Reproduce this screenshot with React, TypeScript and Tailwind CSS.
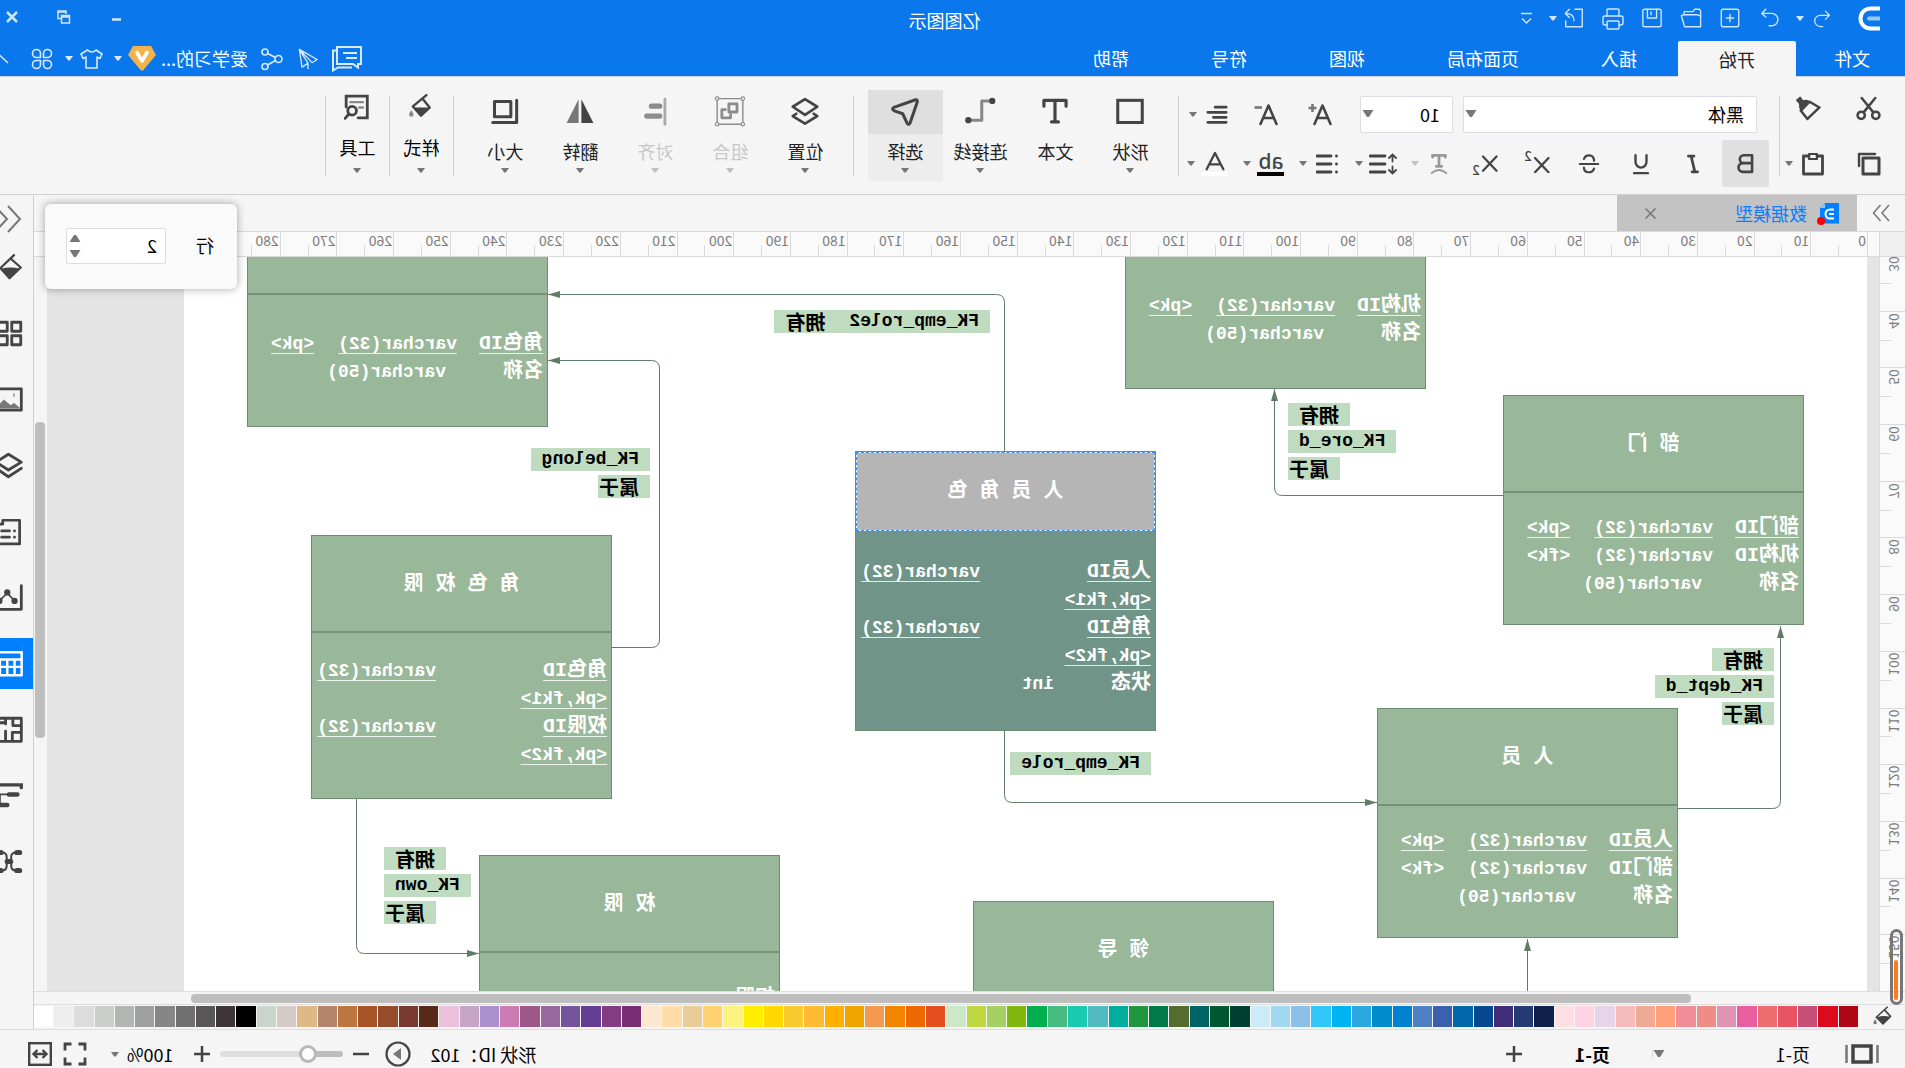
import React from 'react';
import { Printer } from 'lucide-react';

interface IconProps {
  size?: number;
  stroke?: number;
  className?: string;
  children: React.ReactNode;
}

const Icon: React.FC<IconProps> = ({ size = 24, stroke = 2, className = '', children }) => (
  <svg
    width={size}
    height={size}
    viewBox="0 0 24 24"
    fill="none"
    stroke="currentColor"
    strokeWidth={stroke}
    strokeLinecap="round"
    strokeLinejoin="round"
    className={`shrink-0 ${className}`}
  >
    {children}
  </svg>
);

const Caret: React.FC<{ className?: string }> = ({ className = 'text-[#777]' }) => (
  <svg width="8" height="5" viewBox="0 0 8 5" className={`shrink-0 ${className}`}>
    <path d="M0 0h8L4.800 4.400h-1.600z" fill="currentColor" />
  </svg>
);

const BigCaret: React.FC<{ className?: string }> = ({ className = '' }) => (
  <svg width="12" height="8" viewBox="0 0 12 8" className={`shrink-0 text-[#777] ${className}`}>
    <path d="M.5 0h11L7 7H5z" fill="currentColor" />
  </svg>
);

// Quick access toolbar

const quickActions = [
  {
    label: '恢复',
    icon: <path d="M15.500 2.500 L20 7 L15.500 11 M19.500 7 H9 A6.500 6.500 0 0 0 9 20.500 H12" />,
  },
  {
    label: '新建',
    icon: (
      <>
        <rect x="2.500" y="2.500" width="19" height="19" rx="2" />
        <path d="M12 8v8M8 12h8" />
      </>
    ),
  },
  {
    label: '打开',
    icon: <path d="M1.500 6V4.500L2.500 2.500H8L10 5H19.500V8.500M1.500 6V21.500H19L22.500 9.500L20.500 8.500H5L1.500 10" />,
  },
  {
    label: '保存',
    icon: (
      <>
        <rect x="2" y="2.500" width="20" height="19" rx="2" />
        <path d="M7 2.500V12H17V2.500M13 5.500V8.500" />
      </>
    ),
  },
  { label: '打印', icon: null },
  {
    label: '导出',
    icon: <path d="M11 2.500H3V21.500H21V15M12 15C12 9 15 7 21 7M17 2.500L21.500 7L17 11.500" />,
  },
];

const TitleBar: React.FC = () => (
  <div className="grid h-[41px] grid-cols-[1fr_auto_1fr] items-center text-[#cfe5fc]">
    <div className="flex h-full items-center pb-1 pl-[25px]">
      <svg width="22" height="25" viewBox="0 0 22 25" fill="none" strokeWidth="4">
        <path d="M0 2.500H9.500A9.500 9.500 0 0 1 9.500 22.500H0" stroke="#fff" />
        <path d="M0 12.500H11" stroke="#9cc9fa" strokeLinecap="round" />
      </svg>
      <button className="ml-5 flex w-8 justify-center" aria-label="撤销">
        <Icon size={20} stroke={1.5}>
          <path d="M8 2.500 L3 7.500 L8 12.500 M3.500 7.500 H14 A6.500 6.500 0 0 1 14 21 H11" />
        </Icon>
      </button>
      <button className="flex w-3 justify-center" aria-label="撤销列表"><Caret className="text-[#cfe5fc]" /></button>
      <div className="ml-[5px] flex">
        {quickActions.map((action) => (
          <button key={action.label} className="flex w-[39px] justify-center" aria-label={action.label}>
            {action.icon ? <Icon size={22} stroke={1.5}>{action.icon}</Icon> : <Printer size={24} strokeWidth={1.4} />}
          </button>
        ))}
      </div>
      <button className="-ml-1 flex w-3 justify-center" aria-label="导出列表"><Caret className="text-[#cfe5fc]" /></button>
      <button className="flex w-10 justify-center" aria-label="自定义">
        <svg width="11" height="13" viewBox="0 0 11 13" fill="none" stroke="currentColor" strokeWidth="1.500">
          <path d="M0 1.500H11M1 6.500L5.500 11L10 6.500" />
        </svg>
      </button>
    </div>
    <h1 className="pl-4 text-[18px] text-white">亿图图示</h1>
    <div className="flex h-full items-center justify-end gap-[38px] pr-[5px] pb-2">
      <button aria-label="最小化">
        <svg width="14" height="14"><path d="M2 9.500H11" stroke="currentColor" strokeWidth="2.500" /></svg>
      </button>
      <button aria-label="还原">
        <svg width="14" height="14" fill="none" stroke="currentColor" strokeWidth="1.500">
          <path d="M5 4V1H13V8.500H10" />
          <path d="M1.500 5.500H9.500V13H1.500zM1.500 7H9.500M5 2H13" />
        </svg>
      </button>
      <button aria-label="关闭">
        <svg width="14" height="14"><path d="M2 2L12 12M12 2L2 12" stroke="currentColor" strokeWidth="2.500" /></svg>
      </button>
    </div>
  </div>
);

const menuTabs = ['插入', '页面布局', '视图', '符号', '帮助'];

const MenuBar: React.FC = () => (
  <nav className="flex h-[35px] items-stretch text-[18px] text-white">
    <button className="w-[109px] pl-[35px] text-left">文件</button>
    <button className="relative -mb-px rounded-t-xs bg-[#f5f5f5] px-[41px] text-[#222]">开始</button>
    {menuTabs.map((tab) => (
      <button key={tab} className="px-[41px]">{tab}</button>
    ))}
    <div className="-mr-3 ml-auto flex items-center text-[#d9eafd]">
      <button className="flex w-9 justify-center" aria-label="消息">
        <svg width="30" height="26" viewBox="0 0 30 26" fill="none" stroke="currentColor" strokeWidth="2">
          <path d="M1 1H25V18H9L4 21.500V18H1zM5 7H19M5 12H16" />
          <path d="M25 4.500H29V24.500L24 21.500H10" />
        </svg>
      </button>
      <button className="ml-[7px] flex w-7 justify-center" aria-label="发送">
        <Icon size={22} stroke={1.4}>
          <path d="M21.500 1.500L2 12.500L7.500 16L21.500 1.500L18.500 21L12 16.500L21.500 1.500M12 16.500V22.500" />
        </Icon>
      </button>
      <button className="ml-2 flex w-7 justify-center" aria-label="分享">
        <Icon size={24} stroke={1.6}>
          <circle cx="5.500" cy="12" r="3.500" />
          <circle cx="19" cy="5" r="3" />
          <circle cx="19" cy="19.500" r="3" />
          <path d="M8.500 10.500L16.500 6.500M8.500 13.500L16.500 18" />
        </Icon>
      </button>
      <button className="ml-[10px] flex w-[88px] text-white">爱学习的...</button>
      <svg width="28" height="25" viewBox="0 0 28 25" className="ml-1">
        <path d="M5 0H23L28 9L15 24.500H13L0 9z" fill="#f2b34c" />
        <path d="M9 6.500L14 15L19 6.500" fill="none" stroke="#fff" strokeWidth="3.500" strokeLinecap="round" strokeLinejoin="round" />
      </svg>
      <button className="flex w-5 justify-center" aria-label="账户"><Caret className="text-[#d9eafd]" /></button>
      <button className="ml-[2px] flex w-7 justify-center" aria-label="主题">
        <Icon size={24} stroke={1.6}>
          <path d="M8 3L2 7L4 11.500L7 10V21H18V10L21 11.500L23 7L16.500 3Q12 7 8 3z" />
        </Icon>
      </button>
      <button className="ml-[3px] flex w-3 justify-center" aria-label="主题列表"><Caret className="text-[#d9eafd]" /></button>
      <button className="ml-[7px] flex w-7 justify-center" aria-label="应用">
        <Icon size={24} stroke={1.6}>
          <path d="M10.500 10.500H6.500A4 4 0 1 1 10.500 6.500zM13.500 10.500V6.500A4 4 0 1 1 17.500 10.500zM10.500 13.500V17.500A4 4 0 1 1 6.500 13.500zM13.500 13.500H17.500A4 4 0 1 1 13.500 17.500z" />
        </Icon>
      </button>
      <button className="ml-4 flex w-6 justify-center" aria-label="收起">
        <svg width="19" height="11" viewBox="0 0 19 11" fill="none" stroke="currentColor" strokeWidth="1.500">
          <path d="M1 10L9.500 2L18 10" />
        </svg>
      </button>
    </div>
  </nav>
);

// Ribbon

const Separator: React.FC = () => <div className="h-[80px] w-px shrink-0 bg-[#d0d0d0]" />;

const ClipboardGroup: React.FC = () => (
  <div className="w-[125px] shrink-0 pl-6">
    <div className="flex h-[37px] items-start">
      <button aria-label="剪切">
        <Icon size={25} stroke={2.4}>
          <circle cx="5" cy="18.500" r="3.500" />
          <circle cx="19" cy="18.500" r="3.500" />
          <path d="M7.500 15.500L18.500 2M16.500 15.500L5.500 2" />
        </Icon>
      </button>
      <button className="ml-[35px]" aria-label="格式刷">
        <Icon size={25} stroke={2.4}>
          <path d="M11 5.500L19.500 14L13 22L1.500 11z" />
          <path d="M10.500 5.500L14 4L17.500 4.500L20 1L23.500 4L20.500 7.500L20.500 11L19 14.500z" fill="currentColor" strokeWidth="1" />
        </Icon>
      </button>
    </div>
    <div className="mt-[7px] flex h-[47px] items-center">
      <button aria-label="复制">
        <Icon size={24} stroke={2.4}>
          <rect x="2" y="6" width="16" height="16" strokeWidth="3" />
          <path d="M6 2H22V14" />
        </Icon>
      </button>
      <button className="ml-8" aria-label="粘贴">
        <Icon size={24} stroke={2.8}>
          <path d="M8 4H2.500V22H21.500V4H16" />
          <rect x="8" y="2" width="8" height="5" strokeWidth="2.200" />
        </Icon>
      </button>
      <button className="ml-[6px] flex w-3 justify-center" aria-label="粘贴选项"><Caret /></button>
    </div>
  </div>
);

const letterTools = [
  { label: '斜体', icon: <path d="M11 3.500H17M7 20.500H13M14 3.500L10 20.500" strokeWidth="3" /> },
  { label: '下划线', icon: <path d="M6 2.500V9.500A6 6.500 0 0 0 18 9.500V2.500M4.500 22H19.500" strokeWidth="2.600" /> },
  {
    label: '删除线',
    icon: <path d="M2 12H22M17.500 6.500C16.500 3.500 14.500 2.500 12 2.500C8 2.500 6.500 5 6.500 8.500M6.500 17C7.500 20 9.500 21 12 21C16 21 17.500 19 17.500 16" strokeWidth="2.400" />,
  },
];

const FontGroup: React.FC = () => (
  <div className="w-[600px] shrink-0 text-[#444]">
    <div className="flex h-[37px] items-center pl-[22px]">
      <div className="relative h-full w-[294px]">
        <select aria-label="字体" className="h-full w-full appearance-none rounded-xs border border-[#dcdce2] bg-white pl-3 text-[18px] text-black" defaultValue="黑体">
          <option>黑体</option>
        </select>
        <BigCaret className="pointer-events-none absolute top-[14px] right-[2px]" />
      </div>
      <div className="relative ml-[10px] h-full w-[93px]">
        <select aria-label="字号" className="h-full w-full appearance-none rounded-xs border border-[#dcdce2] bg-white pl-3 text-[18px] text-black" defaultValue="10">
          <option>10</option>
        </select>
        <BigCaret className="pointer-events-none absolute top-[14px] right-[2px]" />
      </div>
      <button className="ml-[13px] flex w-[54px] justify-center" aria-label="增大字号">
        <Icon size={24} stroke={2.6}>
          <path d="M1.500 21L9.500 2.500L17.500 21M4.500 15H14.500" />
          <path d="M19.500 1V9M15.500 5H23.500" stroke="#777" strokeLinecap="butt" />
        </Icon>
      </button>
      <button className="flex w-[54px] justify-center" aria-label="减小字号">
        <Icon size={24} stroke={2.6}>
          <path d="M1.500 21L9.500 2.500L17.500 21M4.500 15H14.500" />
          <path d="M16 4.500H23.500" stroke="#777" strokeLinecap="butt" />
        </Icon>
      </button>
      <button className="ml-1 flex w-9 justify-center" aria-label="对齐方式">
        <Icon size={22} stroke={3}>
          <path d="M2 3.500H14M2 9H22M2 14.500H16M2 20H22" />
        </Icon>
      </button>
      <button className="flex w-3 justify-center" aria-label="对齐选项"><Caret /></button>
    </div>
    <div className="mt-[7px] flex h-[47px] items-center pl-[10px]">
      <button className="mr-[3px] flex h-[47px] w-[47px] items-center justify-center rounded-xs bg-[#e0e0e0]" aria-label="加粗">
        <Icon size={21} stroke={3}>
          <path d="M4.500 2.500H14A4.500 4.500 0 0 1 14 11.500H4.500zM4.500 11.500H15A5 5 0 0 1 15 21.500H4.500z" />
        </Icon>
      </button>
      {letterTools.map((tool) => (
        <button key={tool.label} className="flex w-[52px] justify-center" aria-label={tool.label}>
          <Icon size={22}>{tool.icon}</Icon>
        </button>
      ))}
      <button className="flex w-[52px] items-center justify-center" aria-label="上标">
        <Icon size={18} stroke={3}><path d="M2 4L20 23M20 4L2 23" /></Icon>
        <span className="-mt-4 text-[13px] leading-none font-medium">2</span>
      </button>
      <button className="flex w-[52px] items-center justify-center" aria-label="下标">
        <Icon size={18} stroke={3}><path d="M2 2L20 21M20 2L2 21" /></Icon>
        <span className="mt-3 text-[13px] leading-none font-medium">2</span>
      </button>
      <div className="ml-[2px] flex w-14 items-center text-[#999]">
        <button className="flex w-9 justify-center" aria-label="弯曲文字">
          <Icon size={22}>
            <path d="M5 4.500V2.500H19V4.500M12 2.500V14.500M9 14.500H15" strokeWidth="3" />
            <path d="M4 22Q12 15 20 22" />
          </Icon>
        </button>
        <span className="flex w-3 justify-center"><Caret className="text-[#c4c4c4]" /></span>
      </div>
      <div className="flex w-14 items-center">
        <button className="flex w-9 justify-center" aria-label="行距">
          <svg width="28" height="22" viewBox="0 0 28 22" fill="none" stroke="currentColor" strokeWidth="2.800" strokeLinecap="round">
            <path d="M4.500 2V8.500M1 5L4.500 1.500L8 5M4.500 13.500V20M1 17L4.500 20.500L8 17" strokeWidth="1.800" />
            <path d="M12 3H27M12 11H27M12 19H27" />
          </svg>
        </button>
        <span className="flex w-3 justify-center"><Caret /></span>
      </div>
      <div className="flex w-14 items-center">
        <button className="flex w-9 justify-center" aria-label="项目符号">
          <svg width="22" height="22" viewBox="0 0 22 22" fill="none" stroke="currentColor" strokeWidth="2.800" strokeLinecap="round">
            <path d="M1.500 3H1.600M1.500 11H1.600M1.500 19H1.600M7 3H21M7 11H21M7 19H21" />
          </svg>
        </button>
        <span className="flex w-3 justify-center"><Caret /></span>
      </div>
      <div className="flex w-14 items-center">
        <button className="flex w-9 flex-col items-center" aria-label="文字高亮">
          <span className="font-['Noto_Sans'] text-[21px] leading-[21px] font-medium">ab</span>
          <span className="h-1 w-[27px] bg-black" />
        </button>
        <span className="flex w-3 justify-center"><Caret /></span>
      </div>
      <div className="flex w-12 items-center">
        <button className="flex w-9 flex-col items-center gap-px" aria-label="字体颜色">
          <Icon size={20} stroke={2.8}><path d="M2 22L12 2.500L22 22M5.500 16H18.500" /></Icon>
          <span className="h-1 w-[27px] bg-white" />
        </button>
        <span className="flex w-3 justify-center"><Caret /></span>
      </div>
    </div>
  </div>
);

interface RibbonItem {
  label: string;
  icon: React.ReactNode;
  caret?: boolean;
  disabled?: boolean;
  active?: boolean;
}

const drawItems: RibbonItem[] = [
  { label: '形状', caret: true, icon: <rect x="1.500" y="2" width="21" height="19" strokeWidth="2.600" strokeLinejoin="miter" /> },
  { label: '文本', icon: <path d="M2.500 7V2H21.500V7M12 2V20.500M9 20.500H15" strokeWidth="2.700" /> },
  {
    label: '连接线',
    caret: true,
    icon: (
      <>
        <path d="M4 2.500H10.500V19H19" stroke="#888" strokeWidth="2.600" />
        <circle cx="1.500" cy="2.500" r="2.700" fill="currentColor" stroke="none" />
        <circle cx="22" cy="19" r="2.700" fill="currentColor" stroke="none" />
      </>
    ),
  },
  {
    label: '选择',
    caret: true,
    active: true,
    icon: <path d="M3 1.500L21.500 8Q24 9.500 21 11L14 13.500L10 22Q8.500 23.500 7.500 21L1.500 3.500Q1 1 3 1.500z" strokeWidth="2.600" />,
  },
];

const arrangeItems: RibbonItem[] = [
  {
    label: '位置',
    caret: true,
    icon: <path d="M12 1L22.500 7.500L12 14.500L1.500 7.500zM4.500 13.500L1.500 15.500L12 22L22.500 15.500L19.500 13.500" strokeWidth="2.300" />,
  },
  {
    label: '组合',
    caret: true,
    disabled: true,
    icon: (
      <>
        <path d="M1 .5H23V22.500H1z" strokeWidth="1.200" />
        <path d="M6 5H13V12H6zM16 10H19V17H11.500V14.500" strokeWidth="2.400" />
        <g fill="#f5f5f5" strokeWidth="1">
          <circle cx="1" cy=".5" r="1.500" />
          <circle cx="23" cy=".5" r="1.500" />
          <circle cx="1" cy="22.500" r="1.500" />
          <circle cx="23" cy="22.500" r="1.500" />
        </g>
      </>
    ),
  },
  {
    label: '对齐',
    caret: true,
    disabled: true,
    icon: (
      <>
        <path d="M3.500 1V22.500" stroke="#aaa" strokeWidth="2.400" />
        <path d="M8 7H15M8 15.500H19" strokeWidth="4.600" />
      </>
    ),
  },
  {
    label: '翻转',
    caret: true,
    icon: (
      <>
        <path d="M10.800 1V21.500H.5z" fill="currentColor" stroke="none" />
        <path d="M13.200 1V21.500H23.500z" fill="#777" stroke="none" />
      </>
    ),
  },
  {
    label: '大小',
    caret: true,
    icon: <path d="M7 3H21V16H7zM2 2V21H22.500" strokeWidth="2.600" />,
  },
];

const StyleIcon = (
  <>
    <path d="M7 1L19.500 11.500L12 20L4 12.500L10 5" strokeWidth="2.200" />
    <path d="M4.500 12.500H19L12 20z" fill="currentColor" stroke="none" />
    <path d="M21 15q2 2.500 2 4a2 2 0 0 1-4 0q0-1.500 2-4z" fill="#888" stroke="none" />
  </>
);

const ToolIcon = (
  <>
    <path d="M11 22H2.500V2H22V12" strokeWidth="2.600" strokeLinejoin="miter" />
    <path d="M6.500 7.500H18M6.500 12.500H10" stroke="#888" strokeWidth="2.200" />
    <circle cx="16.500" cy="15.500" r="4" strokeWidth="2.600" />
    <path d="M19.500 18.500L23 22.500" strokeWidth="2.600" />
  </>
);

const RibbonButton: React.FC<RibbonItem> = ({ label, icon, caret, disabled, active }) => (
  <button
    disabled={disabled}
    className={`-mt-[6px] flex h-[91px] w-[75px] shrink-0 flex-col items-center rounded-xs ${active ? 'bg-[#ededed]' : ''} ${
      disabled ? 'text-[#c8c8c8]' : 'text-[#222]'
    }`}
  >
    <span className={`flex h-11 w-full items-center justify-center ${active ? 'bg-[#dfdfdf]' : ''} ${disabled ? 'text-[#8c8c8c]' : 'text-[#444]'}`}>
      <Icon size={28} className="overflow-visible">{icon}</Icon>
    </span>
    <span className="mt-[6px] text-[18px] leading-[22px]">{label}</span>
    {caret && <Caret className={disabled ? 'mt-[6px] text-[#c0c0c0]' : 'mt-[6px] text-[#777]'} />}
  </button>
);

const SmallRibbonButton: React.FC<{ label: string; icon: React.ReactNode }> = ({ label, icon }) => (
  <button className="-mt-[6px] flex h-[91px] w-[63px] shrink-0 flex-col items-center text-black">
    <span className="flex h-[34px] items-center text-[#444]"><Icon size={26}>{icon}</Icon></span>
    <span className="mt-3 text-[18px] leading-[22px]">{label}</span>
    <Caret className="mt-[10px] text-[#777]" />
  </button>
);

const Ribbon: React.FC = () => (
  <div className="flex h-[118px] shrink-0 items-start border-b border-[#d0d0d0] bg-[#f5f5f5] pt-[19px] text-[#444]">
    <ClipboardGroup />
    <Separator />
    <FontGroup />
    <Separator />
    <div className="flex px-[10px]">
      {drawItems.map((item) => <RibbonButton key={item.label} {...item} />)}
    </div>
    <div className="pl-1"><Separator /></div>
    <div className="flex px-[10px]">
      {arrangeItems.map((item) => <RibbonButton key={item.label} {...item} />)}
    </div>
    <div className="pl-1"><Separator /></div>
    <SmallRibbonButton label="样式" icon={StyleIcon} />
    <Separator />
    <SmallRibbonButton label="工具" icon={ToolIcon} />
    <Separator />
  </div>
);

// Diagram

interface Field {
  name?: string;
  nameWidth?: string;
  type?: string;
  ref?: string;
  underline?: boolean;
}

interface Entity {
  title: string;
  place: string;
  selected?: boolean;
  fields: Field[];
}

const entities: Entity[] = [
  {
    title: '部 门',
    place: 'left-[63px] top-[138px] h-[230px]',
    fields: [
      { name: '部门ID', nameWidth: 'w-[86px]', type: 'varchar(32)', ref: '<pk>', underline: true },
      { name: '机构ID', nameWidth: 'w-[86px]', type: 'varchar(32)', ref: '<fk>' },
      { name: '名称', nameWidth: 'w-[97px]', type: 'varchar(50)' },
    ],
  },
  {
    title: '机 构',
    place: 'left-[441px] -top-[98px] h-[230px]',
    fields: [
      { name: '机构ID', nameWidth: 'w-[86px]', type: 'varchar(32)', ref: '<pk>', underline: true },
      { name: '名称', nameWidth: 'w-[97px]', type: 'varchar(50)' },
    ],
  },
  {
    title: '人 员',
    place: 'left-[189px] top-[451px] h-[230px]',
    fields: [
      { name: '人员ID', nameWidth: 'w-[86px]', type: 'varchar(32)', ref: '<pk>', underline: true },
      { name: '部门ID', nameWidth: 'w-[86px]', type: 'varchar(32)', ref: '<fk>' },
      { name: '名称', nameWidth: 'w-[97px]', type: 'varchar(50)' },
    ],
  },
  {
    title: '人 员 角 色',
    place: 'left-[711px] top-[194px] h-[280px]',
    selected: true,
    fields: [
      { name: '人员ID', nameWidth: 'w-[171px]', type: 'varchar(32)', underline: true },
      { ref: '<pk,fk1>', underline: true },
      { name: '角色ID', nameWidth: 'w-[171px]', type: 'varchar(32)', underline: true },
      { ref: '<pk,fk2>', underline: true },
      { name: '状态', nameWidth: 'w-[97px]', type: 'int' },
    ],
  },
  { title: '领 导', place: 'left-[593px] top-[644px] h-[230px]', fields: [] },
  {
    title: '权 限',
    place: 'left-[1087px] top-[598px] h-[224px]',
    fields: [
      { name: '权限ID', nameWidth: 'w-[86px]', type: 'varchar(32)', ref: '<pk>', underline: true },
      { name: '名称', nameWidth: 'w-[97px]', type: 'varchar(50)' },
    ],
  },
  {
    title: '角 色 权 限',
    place: 'left-[1255px] top-[278px] h-[264px]',
    fields: [
      { name: '角色ID', nameWidth: 'w-[171px]', type: 'varchar(32)', underline: true },
      { ref: '<pk,fk1>', underline: true },
      { name: '权限ID', nameWidth: 'w-[171px]', type: 'varchar(32)', underline: true },
      { ref: '<pk,fk2>', underline: true },
    ],
  },
  {
    title: '角 色',
    place: 'left-[1319px] -top-[60px] h-[230px]',
    fields: [
      { name: '角色ID', nameWidth: 'w-[86px]', type: 'varchar(32)', ref: '<pk>', underline: true },
      { name: '名称', nameWidth: 'w-[97px]', type: 'varchar(50)' },
    ],
  },
];

const EntityBox: React.FC<{ entity: Entity }> = ({ entity }) => (
  <div
    className={`absolute flex w-[301px] flex-col border border-[#6f8d72] font-bold text-white ${entity.place} ${
      entity.selected ? 'bg-[#719488]' : 'bg-[#99b799]'
    }`}
  >
    <div
      className={`flex shrink-0 items-center justify-center font-['Liberation_Mono','Noto_Sans_CJK_SC',monospace] text-[20px] ${
        entity.selected
          ? 'h-[79px] border border-dashed border-[#3d8fe8] bg-[linear-gradient(#b5b5b5,#b5b5b5),linear-gradient(#fff,#fff)] [background-clip:padding-box,border-box]'
          : 'h-[97px] border-b-2 border-[#75937a] pt-[3px]'
      }`}
    >
      {entity.title}
    </div>
    <div className="flex flex-1 flex-col justify-center pb-[5px] pl-1">
      {entity.fields.map((field, i) => {
        const line = field.underline ? 'underline decoration-1 underline-offset-4 decoration-white/80' : '';
        return (
          <div key={i} className="flex h-7 items-center font-['Liberation_Mono',monospace] text-[18px] whitespace-nowrap">
            {field.name && (
              <span className={`shrink-0 font-['Liberation_Mono','Noto_Sans_CJK_SC',monospace] text-[20px] ${field.nameWidth}`}>
                <span className={line}>{field.name}</span>
              </span>
            )}
            {field.type && <span className={`shrink-0 ${field.ref ? 'mr-6' : ''} ${line}`}>{field.type}</span>}
            {field.ref && <span className={line}>{field.ref}</span>}
          </div>
        );
      })}
    </div>
  </div>
);

const relations = [
  { place: 'left-[93px] top-[391px] items-start', lines: ['拥有', 'FK_dept_d', '属于'] },
  { place: 'left-[469px] top-[146px] w-[110px] items-end', lines: ['拥有', 'FK_ore_d', '属于'] },
  { place: 'left-[716px] top-[495px] items-start', lines: ['FK_emp_role'] },
  { place: 'left-[877px] top-[53px] items-start', lines: ['FK_emp_role2', '拥有'], inline: true },
  { place: 'left-[1217px] top-[191px] items-start', lines: ['FK_belong', '属于'] },
  { place: 'left-[1395px] top-[590px] w-[88px] items-end', lines: ['拥有', 'FK_own', '属于'] },
];

const textStyle = (line: string) =>
  line.startsWith('FK')
    ? "font-['Liberation_Mono',monospace] text-[18px]"
    : "font-['Noto_Sans_CJK_SC',sans-serif] text-[20px]";

const connectors = [
  'M364 238.500H584.500Q592.500 238.500 592.500 230.500V132',
  'M189 551.500H94.500Q86.500 551.500 86.500 543.500V369',
  'M339.500 735V682',
  'M862.500 474V537.500Q862.500 545.500 854.500 545.500H490',
  'M862.500 194V45.500Q862.500 37.500 870.500 37.500H1319',
  'M1255 390.500H1215.500Q1207.500 390.500 1207.500 382.500V111.500Q1207.500 103.500 1215.500 103.500H1319',
  'M1510.500 541V688.500Q1510.500 696.500 1502.500 696.500H1388',
];

const Canvas: React.FC = () => (
  <div className="min-w-0 flex-1 overflow-hidden bg-[#e4e4e4] pr-[137px] pl-3">
    <div className="relative h-full bg-white">
      <svg className="absolute inset-0 h-full w-full overflow-visible">
        <defs>
          <marker id="arrow" viewBox="0 0 12 8" refX="12" refY="4" markerWidth="12" markerHeight="8" markerUnits="userSpaceOnUse" orient="auto">
            <path d="M0 .5L12 4L0 7.500z" fill="#5f7d66" />
          </marker>
        </defs>
        {connectors.map((d) => (
          <path key={d} d={d} fill="none" stroke="#5f7d66" markerEnd="url(#arrow)" />
        ))}
      </svg>
      {entities.map((entity) => <EntityBox key={entity.title} entity={entity} />)}
      {relations.map((relation, i) => (
        <div key={i} className={`absolute flex flex-col gap-1 font-bold whitespace-nowrap text-black ${relation.place}`}>
          {relation.inline ? (
            <span className="flex h-[23px] items-center gap-6 bg-[#c0dcc0] px-[11px]">
              {relation.lines.map((line) => <span key={line} className={textStyle(line)}>{line}</span>)}
            </span>
          ) : (
            relation.lines.map((line) => (
              <span
                key={line}
                className={`flex h-[23px] items-center bg-[#c0dcc0] ${line === '属于' ? 'pr-px pl-[11px]' : 'px-[11px]'} ${textStyle(line)}`}
              >
                {line}
              </span>
            ))
          )}
        </div>
      ))}
    </div>
  </div>
);

const topMarks = Array.from({ length: 32 }, (_, i) => i * 10);
const sideMarks = Array.from({ length: 13 }, (_, i) => 30 + i * 10);

const TopRuler: React.FC = () => (
  <div className="flex h-[26px] shrink-0 border-y border-[#dadada] bg-[#fafafa] pr-5 text-[14px] leading-[17px] text-[#7c7c7c]">
    <div className="w-[26px] shrink-0 border-r border-[#dadada] bg-[#f0f0f0]" />
    <div className="grid min-w-0 flex-1 grid-cols-[repeat(32,minmax(0,1fr))] pl-[11px]">
      {topMarks.map((mark) => (
        <div key={mark} className="flex border-l border-[#dadada]">
          <span className="w-1/2 pl-px">{mark}</span>
          <span className="mt-auto h-[11px] border-l border-[#dadada]" />
        </div>
      ))}
    </div>
  </div>
);

const SideRuler: React.FC = () => (
  <div className="w-[26px] shrink-0 overflow-hidden border-r border-[#dadada] bg-[#fafafa]">
    <div className="-mt-[3px] grid h-[calc(100%+3px)] grid-rows-[repeat(13,minmax(0,1fr))] text-[14px] leading-[20px] text-[#7c7c7c]">
      {sideMarks.map((mark) => (
        <div key={mark} className="flex min-h-0 flex-col border-t border-[#dadada]">
          <span className="h-1/2 w-5 shrink-0 rotate-180 pb-px text-right [writing-mode:vertical-rl]">{mark}</span>
          <span className="ml-auto w-[11px] border-t border-[#dadada]" />
        </div>
      ))}
    </div>
  </div>
);

const swatches = [
  '#b00514', '#dc0a1c', '#c85078', '#e85464', '#ec6c70', '#e85e9e', '#e094b4', '#f08c86', '#f08e98', '#ffa07a',
  '#eeaa94', '#f6bcbc', '#e8d4e8', '#ffd2e4', '#fddfe3', '#10204c', '#243a72', '#402c78', '#064890', '#0068a8',
  '#3c60ae', '#5080c4', '#0080d0', '#008ccc', '#2ca8e0', '#00b4f0', '#30c8fa', '#8cc0e8', '#a0d8f0', '#ccebf6',
  '#004030', '#005830', '#006464', '#556b2f', '#007a48', '#20963e', '#00ae9e', '#50bcc0', '#1acab0', '#48bc80',
  '#00b050', '#80b810', '#a4d064', '#c0d840', '#cce8c8', '#e44e20', '#ee6800', '#f28400', '#f49a50', '#f0a400',
  '#ffb000', '#ffba34', '#f8ca30', '#fed800', '#ffee00', '#fcf280', '#ffd270', '#eacc96', '#ffdcaa', '#fce8d0',
  '#782e72', '#823c82', '#643e94', '#74549c', '#96689e', '#9e5888', '#cc7cb2', '#aa90cc', '#c6a4c8', '#eac0da',
  '#582818', '#783a30', '#944c2a', '#a85428', '#be7640', '#b4846c', '#deb886', '#d4cac6', '#c8d4cc', '#000000',
  '#3e3636', '#585656', '#707070', '#868686', '#9ea09f', '#b4b6b4', '#cccecc', '#dcdcdc', '#eeeeee', '#ffffff',
];

const Palette: React.FC = () => (
  <div className="flex h-6 shrink-0 items-start bg-[#f5f5f5] pt-px">
    <button className="flex w-[47px] shrink-0 justify-center pr-1 text-[#444]" aria-label="填充颜色">
      <Icon size={20} stroke={2}>
        <path d="M7 1.500L20 13.500L12 21.500L3 12.500L10 5" />
        <path d="M3.500 13Q12 11 19.500 13.500L12 21.500z" fill="currentColor" stroke="none" />
        <path d="M21.500 16q2 3 2 4a2 2 0 0 1-4 0q0-1 2-4z" fill="#777" stroke="none" />
      </Icon>
    </button>
    <div className="flex min-w-0 flex-1 gap-px">
      {swatches.map((color) => (
        <button key={color} className="h-[21px] flex-1" style={{ backgroundColor: color }} aria-label={color} />
      ))}
    </div>
  </div>
);

const panels = [
  { label: '填充', icon: <><path d="M8 1L20 12.500L12 21.500L2 12L11 4" /><path d="M3 13Q11 11 19.500 13L12 21.500z" fill="currentColor" stroke="none" /></> },
  { label: '符号', icon: <path d="M2 2H10V10H2zM14 2H22V10H14zM2 14H10V22H2zM14 14H22V22H14z" strokeWidth="2.500" /> },
  {
    label: '图片',
    icon: (
      <>
        <rect x="1.500" y="2.500" width="22" height="19" strokeWidth="2.500" />
        <path d="M3 19L8 15L11 17L17 12L22 17V20H3z" fill="#777" stroke="none" />
        <path d="M7.500 8H8.500" stroke="#777" strokeWidth="3" strokeLinecap="butt" />
      </>
    ),
  },
  { label: '图层', icon: <path d="M13 2L24 9L13 16L1.500 9zM1.500 14.500L13 22L24 14.500" strokeWidth="2.500" /> },
  { label: '注释', icon: <path d="M3 2H18V5.500H22V23H3zM7.500 11.500H7.600M12 11.500H19M7.500 17H7.600M12 17H19" strokeWidth="2.400" /> },
  {
    label: '图表',
    icon: (
      <>
        <path d="M1.500 1.500V22.500H24" strokeWidth="2.500" />
        <path d="M7.500 15L14 8L21 15" strokeWidth="1.500" />
        <circle cx="7.500" cy="15" r="2.800" fill="currentColor" stroke="none" />
        <circle cx="14" cy="7.500" r="2.800" fill="currentColor" stroke="none" />
        <circle cx="21" cy="15" r="2.800" fill="currentColor" stroke="none" />
      </>
    ),
  },
  {
    label: '表格',
    active: true,
    icon: <path d="M1.200 2H24V22.500H1.200zM1.200 8.500H24M1.200 15H24M7.500 9V22M14 9V22M20.500 9V22" strokeWidth="2.200" />,
  },
  { label: '平面图', icon: <path d="M1.500 2H24V22.500H1.500zM9 2V8.500H2M15.500 2V7M15.500 6H21M2 14.500H9.500V22M15.500 13.500V22" strokeWidth="2.500" /> },
  {
    label: '甘特图',
    icon: (
      <>
        <path d="M1.500 5V2.500H24" strokeWidth="3" strokeLinejoin="miter" />
        <path d="M5 11H12.500M14 20.500H20" strokeWidth="4" />
        <path d="M13 11H20.500V19" strokeWidth="1.500" />
      </>
    ),
  },
  {
    label: '思维导图',
    icon: (
      <>
        <path d="M6 4Q10.500 4 10.500 8V16Q10.500 20 6 20M19 4Q14.500 4 14.500 8V16Q14.500 20 19 20" strokeWidth="1.800" />
        <path d="M3 4H5.500M3 20H5.500M19.500 4H22M19.500 20H22M11 12H14" strokeWidth="4.600" />
      </>
    ),
  },
];

const SidePanel: React.FC = () => (
  <aside className="w-[34px] shrink-0 overflow-hidden border-l border-[#d0d0d0] bg-[#f5f5f5] text-[#444]">
    <button className="flex h-[47px] w-12 items-center pl-[11px]" aria-label="展开">
      <svg width="28" height="28" viewBox="0 0 28 28" fill="none" stroke="#777" strokeWidth="2" className="shrink-0">
        <path d="M14 1L2 14L14 27M27 1L15 14L27 27" />
      </svg>
    </button>
    <div className="flex flex-col gap-[15px]">
      {panels.map((panel) => (
        <button
          key={panel.label}
          aria-label={panel.label}
          className={`flex h-[51px] w-12 items-center pl-[10px] ${panel.active ? 'bg-[#0080ff] text-white' : ''}`}
        >
          <Icon size={27} className="overflow-visible">{panel.icon}</Icon>
        </button>
      ))}
    </div>
  </aside>
);

const RowPopup: React.FC = () => (
  <div className="absolute top-[9px] right-[45px] flex h-[85px] w-[192px] items-center rounded-md bg-[#fafafa] pb-[2px] pl-[23px] text-[18px] text-black shadow-[0_0_8px_rgba(0,0,0,0.35)]">
    <label htmlFor="rows" className="w-12">行</label>
    <div className="relative h-9 w-[100px]">
      <input id="rows" type="text" defaultValue="2" className="h-full w-full rounded-xs border border-[#dcdce2] bg-white pb-[2px] pl-2" />
      <div className="absolute inset-y-0 right-[3px] flex flex-col justify-center gap-2">
        <button aria-label="增加"><BigCaret className="-scale-y-100" /></button>
        <button aria-label="减少"><BigCaret /></button>
      </div>
    </div>
  </div>
);

const StatusBar: React.FC = () => (
  <footer className="flex h-[39px] shrink-0 items-center border-t border-[#dcdcdc] bg-[#f5f5f5] pt-[10px] pl-[26px] text-[18px] text-black">
    <button aria-label="页面视图" className="text-[#444]">
      <svg width="34" height="20" viewBox="0 0 34 20" fill="none" stroke="currentColor">
        <path d="M1.500 1V19M32.500 1V19" stroke="#777" strokeWidth="2.500" />
        <rect x="8" y="2" width="18" height="16" strokeWidth="3.500" />
      </svg>
    </button>
    <button className="ml-[35px] w-[145px] text-left">页-1</button>
    <button aria-label="页面列表" className="flex w-[13px] border-r border-[#d8d8d8]"><BigCaret /></button>
    <button className="ml-[42px] font-bold">页-1</button>
    <button aria-label="添加页面" className="ml-[53px] text-[#444]">
      <svg width="16" height="16"><path d="M8 0V16M0 8H16" stroke="currentColor" strokeWidth="2.500" /></svg>
    </button>
    <span className="ml-auto">形状 ID：102</span>
    <button aria-label="播放" className="ml-5 text-[#444]">
      <svg width="26" height="26" viewBox="0 0 26 26" fill="none">
        <circle cx="13" cy="13" r="11.500" stroke="currentColor" strokeWidth="2.200" />
        <path d="M10 7L18 13L10 19z" fill="#777" />
      </svg>
    </button>
    <button aria-label="缩小" className="ml-4 text-[#444]">
      <svg width="16" height="16"><path d="M0 8H16" stroke="currentColor" strokeWidth="2.500" /></svg>
    </button>
    <input
      type="range"
      aria-label="缩放"
      defaultValue="24"
      className="mx-[10px] h-[6px] w-[123px] appearance-none rounded-full bg-linear-to-r from-[#bdbdbd] from-28% to-[#dedede] to-28% [&::-webkit-slider-thumb]:size-[18px] [&::-webkit-slider-thumb]:appearance-none [&::-webkit-slider-thumb]:rounded-full [&::-webkit-slider-thumb]:border-3 [&::-webkit-slider-thumb]:border-[#b8b8b8] [&::-webkit-slider-thumb]:bg-white"
    />
    <button aria-label="放大" className="text-[#444]">
      <svg width="16" height="16"><path d="M8 0V16M0 8H16" stroke="currentColor" strokeWidth="2.500" /></svg>
    </button>
    <button className="ml-5 flex items-center gap-2">100%<Caret /></button>
    <button aria-label="全屏" className="ml-6 text-[#444]">
      <svg width="24" height="24" viewBox="0 0 24 24" fill="none" stroke="currentColor" strokeWidth="2.800">
        <path d="M2 8.500V2H8.500M15.500 2H22V8.500M22 15.500V22H15.500M8.500 22H2V15.500" />
      </svg>
    </button>
    <button aria-label="适应宽度" className="mr-7 ml-[11px] text-[#444]">
      <svg width="24" height="24" viewBox="0 0 24 24" fill="none" stroke="currentColor" strokeWidth="2.400">
        <rect x="1.200" y="1.200" width="21.600" height="21.600" />
        <path d="M6 12H18M9.500 8L5.500 12L9.500 16M14.500 8L18.500 12L14.500 16" />
      </svg>
    </button>
  </footer>
);

export default function App() {
  return (
    <div className="flex h-screen w-full -scale-x-100 flex-col overflow-hidden bg-[#f5f5f5] font-['Noto_Sans_CJK_SC',sans-serif]">
      <header className="shrink-0 border-b border-[#d0d4dc] bg-[#0a78ec]">
        <TitleBar />
        <MenuBar />
      </header>
      <Ribbon />
      <div className="relative flex min-h-0 flex-1">
        <main className="flex min-w-0 flex-1 flex-col">
          <div className="flex h-9 shrink-0">
            <button className="flex w-12 items-center justify-center" aria-label="展开符号库">
              <svg width="18" height="18" viewBox="0 0 18 18" fill="none" stroke="#777" strokeWidth="1.500">
                <path d="M1 1L8 9L1 17M9.500 1L16.500 9L9.500 17" />
              </svg>
            </button>
            <div className="flex w-60 items-center bg-[#c3c3c3] pl-[18px]">
              <svg width="22" height="23" viewBox="0 0 22 23" fill="none">
                <path d="M0 1H14L19 6V21.500H0z" fill="#0080ff" />
                <path d="M14 1L19 6H14z" fill="#8cc4ff" />
                <path d="M5 7.500H9A4.500 4.500 0 0 1 9 16.500H5M5 12H10" stroke="#fff" strokeWidth="2" />
                <circle cx="18" cy="19" r="4" fill="#f00" />
              </svg>
              <span className="ml-[10px] text-[18px] text-[#0a80ff]">数据模型</span>
              <button className="mr-7 ml-auto" aria-label="关闭文档">
                <svg width="11" height="11"><path d="M.5.5L10.500 10.500M10.500.5L.5 10.500" stroke="#777" strokeWidth="1.500" /></svg>
              </button>
            </div>
          </div>
          <TopRuler />
          <div className="flex min-h-0 flex-1">
            <SideRuler />
            <Canvas />
            <div className="flex w-[13px] shrink-0 flex-col items-center bg-[#f5f5f5] pt-[165px]">
              <div className="h-[316px] w-[10px] rounded-sm bg-[#bebebe]" />
            </div>
          </div>
          <div className="flex h-[14px] shrink-0 items-center border-y border-[#dedede] pr-[157px] pl-[214px]">
            <div className="h-[9px] flex-1 rounded-sm bg-[#bebebe]" />
          </div>
          <Palette />
        </main>
        <SidePanel />
        <RowPopup />
        {/* recorder level */}
        <div className="absolute bottom-6 left-[2px] flex h-[76px] w-[13px] items-end justify-center rounded-full border-3 border-[#777] pb-[2px]">
          <div className="h-10 w-1 rounded-full bg-[#ff7a1c]" />
        </div>
      </div>
      <StatusBar />
    </div>
  );
}
